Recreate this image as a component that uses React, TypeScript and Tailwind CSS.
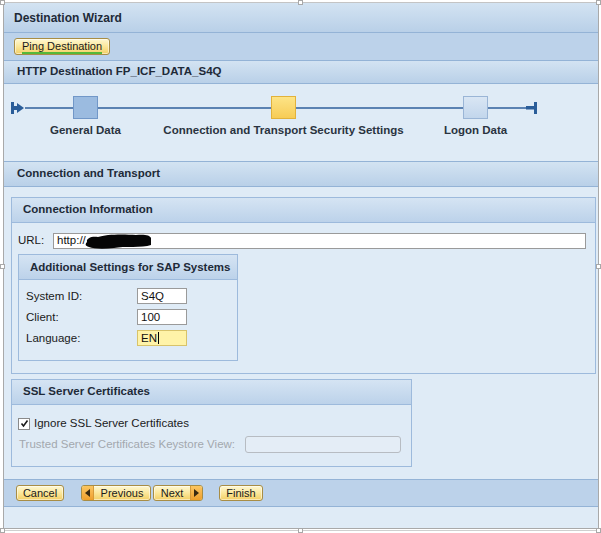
import React from 'react';

const font = { fontFamily: '"Liberation Sans", Arial, sans-serif' };

function Handle({ className }: { className: string }) {
  return <div className={`absolute w-[5px] h-[5px] bg-white border border-[#a8a8a8] ${className}`} />;
}

function Bar({ children, className = '' }: { children?: React.ReactNode; className?: string }) {
  return (
    <div
      className={`flex items-center bg-gradient-to-b from-[#d3e3f2] to-[#b9d0e8] border-b border-[#94b3d6] text-[11.5px] font-bold text-[#1e2a38] ${className}`}
    >
      {children}
    </div>
  );
}

function YButton({ children, className = '' }: { children: React.ReactNode; className?: string }) {
  return (
    <div
      className={`flex items-center h-[16px] rounded-[3px] border border-[#a88d45] bg-gradient-to-b from-[#fff8d2] via-[#fbe79a] to-[#f3cf63] text-[11px] text-[#1a1a1a] shadow-[inset_0_0_0_1px_rgba(255,255,255,0.5)] ${className}`}
    >
      {children}
    </div>
  );
}

function Panel({
  title,
  className = '',
  children,
}: {
  title: string;
  className?: string;
  children: React.ReactNode;
}) {
  return (
    <div className={`border border-[#9dbadc] bg-[#dfebf6] ${className}`}>
      <div className="h-[25px] flex items-center pl-[11px] bg-gradient-to-b from-[#d5e4f3] to-[#bcd2ea] border-b border-[#9dbadc] text-[11.5px] font-bold text-[#1e2a38]">
        {title}
      </div>
      {children}
    </div>
  );
}

function Step({ label, box }: { label: string; box: string }) {
  return (
    <div className="relative w-[25px] h-[23px] shrink-0">
      <div className={`w-full h-full border ${box}`} />
      {/* label hangs under the box, centred on it */}
      <div className="absolute top-[26px] left-1/2 -translate-x-1/2 whitespace-nowrap text-[11.5px] font-bold text-[#2a3340]">
        {label}
      </div>
    </div>
  );
}

function Line({ w }: { w: string }) {
  return <div className={`h-[2px] bg-[#5b82b2] ${w}`} />;
}

function Field({ label, value, yellow }: { label: string; value: string; yellow?: boolean }) {
  return (
    <div className="flex items-center h-[16px]">
      <div className="w-[111px] text-[11.5px] text-[#1a1a1a]">{label}</div>
      <div
        className={`w-[50px] h-[16px] flex items-center px-[3px] text-[11.5px] text-[#111] ${
          yellow ? 'bg-[#fff3a8] border border-[#d8c36a]' : 'bg-white border border-[#9a9a9a]'
        }`}
      >
        {value}
        {yellow && <span className="w-[1px] h-[12px] bg-black ml-[1px]" />}
      </div>
    </div>
  );
}

export default function App() {
  return (
    <div style={font} className="relative w-[601px] h-[533px] bg-white overflow-hidden">
      <div className="absolute top-[2px] left-0 right-0 h-[1px] bg-[#c4c4c4]" />
      <div className="ml-[3px] mt-[3px] w-[596px] h-[526px] border-l border-r border-b border-[#a9a9a9] bg-[#dfebf6] flex flex-col">
        {/* title */}
        <Bar className="h-[30px] pl-[10px] text-[12px]">Destination Wizard</Bar>

        {/* toolbar */}
        <div className="h-[28px] flex items-center pl-[10px] bg-[#bcd2ea] border-b border-[#94b3d6]">
          <YButton className="px-[7px] h-[17px]">
            <span className="border-b-2 border-[#55b83a] leading-[12px]">Ping Destination</span>
          </YButton>
        </div>

        <Bar className="h-[23px] pl-[13px]">HTTP Destination FP_ICF_DATA_S4Q</Bar>

        {/* stepper */}
        <div className="h-[77px] pt-[12px] shrink-0">
          <div className="flex items-center h-[23px] pl-[7px]">
            <svg width="14" height="12" viewBox="0 0 14 12" className="shrink-0">
              <rect x="0" y="0" width="3" height="12" fill="#2a5d99" />
              <rect x="3" y="4" width="4" height="4" fill="#2a5d99" />
              <path d="M6 1 L13 6 L6 11 Z" fill="#2a5d99" />
            </svg>
            <Line w="w-[48px]" />
            <Step label="General Data" box="bg-[#9bbbe0] border-[#7197c8]" />
            <Line w="w-[173px]" />
            <Step
              label="Connection and Transport Security Settings"
              box="bg-gradient-to-b from-[#fde486] to-[#f7cc55] border-[#e2b23b]"
            />
            <Line w="w-[167px]" />
            <Step label="Logon Data" box="bg-gradient-to-b from-[#d9e6f4] to-[#c2d6ec] border-[#9ab5d6]" />
            <Line w="w-[38px]" />
            <svg width="11" height="12" viewBox="0 0 11 12" className="shrink-0">
              <rect x="0" y="4" width="8" height="3.5" fill="#2a5d99" />
              <rect x="8" y="0" width="3" height="12" fill="#2a5d99" />
            </svg>
          </div>
        </div>

        <div className="h-[26px] flex items-center pl-[13px] bg-gradient-to-b from-[#d3e3f2] to-[#b9d0e8] border-t border-b border-[#94b3d6] text-[11.5px] font-bold text-[#1e2a38]">
          Connection and Transport
        </div>

        {/* content */}
        <div className="flex flex-col pl-[7px] pr-[2px] pt-[10px]">
          <Panel title="Connection Information" className="h-[177px]">
            <div className="flex items-center pl-[6px] mt-[9px] pr-[9px]">
              <span className="w-[35px] text-[11.5px] text-[#1a1a1a]">URL:</span>
              <div className="relative flex-1 h-[16px] bg-white border border-[#9a9a9a] flex items-center pl-[3px] text-[11.5px] text-[#111]">
                http://
                <svg width="68" height="16" viewBox="0 0 68 16" className="absolute left-[30px] top-[-1px]">
                  <path
                    d="M3 9 C2 5 8 3 14 4 C22 1 40 1 52 2 C60 1 66 2 67 5 L67 12 C58 15 40 13 30 15 C20 16 10 16 5 14 C1 13 1 11 3 9 Z"
                    fill="#050505"
                  />
                </svg>
              </div>
            </div>
            <Panel title="Additional Settings for SAP Systems" className="ml-[6px] mt-[5px] w-[220px] h-[107px]">
              <div className="flex flex-col gap-[5px] pl-[7px] pt-[8px]">
                <Field label="System ID:" value="S4Q" />
                <Field label="Client:" value="100" />
                <Field label="Language:" value="EN" yellow />
              </div>
            </Panel>
          </Panel>

          <Panel title="SSL Server Certificates" className="mt-[5px] w-[401px] h-[88px]">
            <div className="flex items-center pl-[6px] mt-[12px] h-[13px]">
              <div className="w-[12px] h-[12px] bg-white border border-[#8a8a8a] flex items-center justify-center">
                <svg width="9" height="9" viewBox="0 0 9 9">
                  <path d="M1.5 4.5 L3.5 7 L7.5 1.5" stroke="#1a1a1a" strokeWidth="1.6" fill="none" />
                </svg>
              </div>
              <span className="ml-[4px] text-[11.5px] text-[#1a1a1a]">Ignore SSL Server Certificates</span>
            </div>
            <div className="flex items-center pl-[7px] mt-[6px]">
              <span className="w-[226px] text-[11.5px] text-[#a3a8ae]">Trusted Server Certificates Keystore View:</span>
              <div className="w-[156px] h-[17px] rounded-[3px] border border-[#b7bcc2] bg-[#e4edf6]" />
            </div>
          </Panel>
        </div>

        {/* footer */}
        <div className="mt-[12px] h-[28px] flex items-center pl-[12px] bg-[#bcd2ea] border-t border-b border-[#94b3d6]">
          <YButton className="w-[48px] justify-center">Cancel</YButton>
          <YButton className="ml-[17px] w-[70px] overflow-hidden">
            <span className="h-full w-[12px] flex items-center justify-center bg-gradient-to-b from-[#fbc661] to-[#ef9f2a] border-r border-[#d79a3a]">
              <svg width="5" height="8" viewBox="0 0 5 8">
                <path d="M5 0 L0 4 L5 8 Z" fill="#3b2a10" />
              </svg>
            </span>
            <span className="flex-1 text-center">Previous</span>
          </YButton>
          <YButton className="ml-[2px] w-[50px] overflow-hidden">
            <span className="flex-1 text-center">Next</span>
            <span className="h-full w-[12px] flex items-center justify-center bg-gradient-to-b from-[#fbc661] to-[#ef9f2a] border-l border-[#d79a3a]">
              <svg width="5" height="8" viewBox="0 0 5 8">
                <path d="M0 0 L5 4 L0 8 Z" fill="#3b2a10" />
              </svg>
            </span>
          </YButton>
          <YButton className="ml-[16px] w-[44px] justify-center">Finish</YButton>
        </div>
      </div>
      <div className="absolute top-[530px] left-[2px] right-[2px] h-[1px] bg-[#cfcfcf]" />
      <Handle className="top-0 left-0" />
      <Handle className="top-0 left-[298px]" />
      <Handle className="top-0 right-0" />
      <Handle className="top-[264px] left-0" />
      <Handle className="top-[264px] right-0" />
      <Handle className="bottom-0 left-0" />
      <Handle className="bottom-0 left-[298px]" />
      <Handle className="bottom-0 right-0" />
    </div>
  );
}
